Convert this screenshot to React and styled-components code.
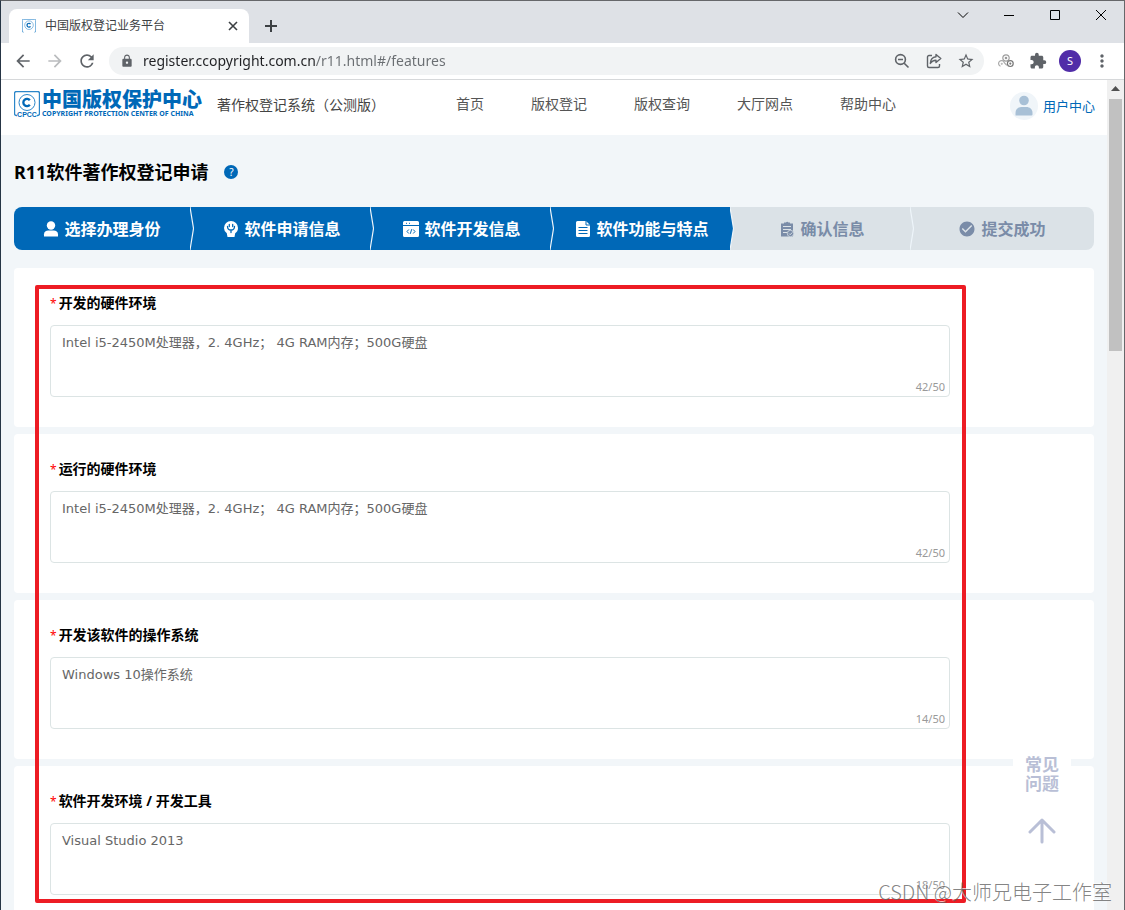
import React from 'react';
import styled, { createGlobalStyle } from 'styled-components';
import {
	MdArrowBack,
	MdArrowForward,
	MdCheckCircle,
	MdExtension,
	MdLock,
	MdMoreVert,
	MdRefresh,
	MdStarBorder
} from 'react-icons/md';

const navItems = ['首页', '版权登记', '版权查询', '大厅网点', '帮助中心'];

const hardware = 'Intel i5-2450M处理器，2. 4GHz； 4G RAM内存；500G硬盘';

const fields = [
	{ id: 'dev-hardware', label: '开发的硬件环境', value: hardware, count: 42 },
	{ id: 'run-hardware', label: '运行的硬件环境', value: hardware, count: 42 },
	{ id: 'dev-os', label: '开发该软件的操作系统', value: 'Windows 10操作系统', count: 14 },
	{ id: 'dev-tools', label: '软件开发环境 / 开发工具', value: 'Visual Studio 2013', count: 18 }
];

const BLUE = '#0068b7';
const GRAY = '#dbe2e7';

const PersonIcon = () => (
	<svg width="16" height="16" viewBox="0 0 16 16" fill="currentColor">
		<circle cx="8" cy="4.5" r="4.2" />
		<path d="M1 15.5v-2.3C1 10.8 3 9.5 5.2 9.5h5.6c2.200 0 4.200 1.300 4.200 3.700v2.300z" />
	</svg>
);

const IdeaIcon = () => (
	<svg width="16" height="16" viewBox="0 0 16 16">
		<path d="M8 0a7 7 0 0 1 7 7c0 2.500-1.200 4.200-2.800 5.300L11.500 16h-7l-.7-3.700A6.500 6.500 0 0 1 1 7a7 7 0 0 1 7-7z" fill="currentColor" />
		<path d="M4.500 5.500c0 2.500 1.500 3.500 3.500 3.500s3.500-1 3.500-3.500M6.300 3.500v2M9.700 3.500v2M8 9v2.500" fill="none" stroke={BLUE} strokeWidth="1.300" strokeLinecap="round" />
	</svg>
);

const CodeIcon = () => (
	<svg width="16" height="16" viewBox="0 0 16 16">
		<path d="M1.500 0h13A1.500 1.500 0 0 1 16 1.500V4H0V1.500A1.500 1.500 0 0 1 1.500 0zM0 5h16v9.500a1.500 1.500 0 0 1-1.500 1.500h-13A1.500 1.500 0 0 1 0 14.500z" fill="currentColor" />
		<path d="M5.800 8.500 4 10.500l1.800 2M10.200 8.500l1.800 2-1.800 2M8.700 8.200l-1.400 4.600M3 2.300h1M6 2.300h1" fill="none" stroke={BLUE} />
	</svg>
);

const FileIcon = () => (
	<svg width="16" height="16" viewBox="0 0 16 16">
		<path d="M2.500 0H11l4 4v10.500a1.500 1.500 0 0 1-1.500 1.500h-11A1.500 1.500 0 0 1 1 14.500v-13A1.500 1.500 0 0 1 2.500 0z" fill="currentColor" />
		<path d="M3.500 6.500h9M3.500 9.500h9M3.500 12.500h9M11 0v4h4" fill="none" stroke={BLUE} />
	</svg>
);

const ClipboardIcon = () => (
	<svg width="16" height="16" viewBox="0 0 16 16">
		<path d="M2 2.500h3V1.500h2a1.500 1.500 0 0 1 2.500 0H11v1h3V15.500H2z" fill="currentColor" />
		<path d="M4 5.500h8M4 8.500h8M4 11.500h4" fill="none" stroke={GRAY} />
		<circle cx="11.500" cy="12.500" r="3.200" fill="currentColor" stroke={GRAY} strokeWidth="0.800" />
		<path d="m10 12.500 1.200 1.200 2-2.200" fill="none" stroke={GRAY} />
	</svg>
);

const SuccessIcon = () => <MdCheckCircle size={18} />;

const steps = [
	{ label: '选择办理身份', icon: PersonIcon, done: true, next: BLUE },
	{ label: '软件申请信息', icon: IdeaIcon, done: true, next: BLUE },
	{ label: '软件开发信息', icon: CodeIcon, done: true, next: BLUE },
	{ label: '软件功能与特点', icon: FileIcon, done: true, next: GRAY },
	{ label: '确认信息', icon: ClipboardIcon, next: GRAY },
	{ label: '提交成功', icon: SuccessIcon }
];

const StepEdge = ({ from, to }) => (
	<svg width="4" height="43" viewBox="0 0 4 43">
		<path d="M0 0h4v43H0z" fill={to} />
		<path d="M0 0 3.500 21.500 0 43z" fill={from} />
		<path d="M0 0 3.500 21.500 0 43" fill="none" stroke="#eef5fa" strokeWidth="1.200" />
	</svg>
);

const SealIcon = ({ size, mark }) => (
	<svg width={size} height={size} viewBox="0 0 26 26" fill="none" stroke="#2b86c9">
		<path d="M3 24.500H2.500a2 2 0 0 1-2-2v-20a2 2 0 0 1 2-2h21a2 2 0 0 1 2 2v20a2 2 0 0 1-2 2H23" strokeWidth="1.400" />
		<circle cx="13" cy="11.500" r="8" />
		<path d="M15.800 9.300a3.600 3.600 0 1 0 0 4.400" strokeWidth="2.300" stroke={BLUE} />
		{mark && (
			<text x="13" y="26" textAnchor="middle" fontSize="7" fontWeight="700" fontFamily="Liberation Sans, sans-serif" fill={BLUE} stroke="none">
				CPCC
			</text>
		)}
	</svg>
);

const ZoomOutIcon = () => (
	<svg width="16" height="16" viewBox="0 0 16 16" fill="none" stroke="currentColor" strokeWidth="1.600">
		<circle cx="6.500" cy="6.500" r="4.900" />
		<path d="m10.200 10.200 4.300 4.300M4 6.500h5" />
	</svg>
);

const ShareIcon = () => (
	<svg width="16" height="16" viewBox="0 0 16 16" fill="none" stroke="currentColor" strokeWidth="1.400" strokeLinejoin="round">
		<path d="M6 2.500H3A1.500 1.500 0 0 0 1.500 4v9A1.500 1.500 0 0 0 3 14.500h9a1.500 1.500 0 0 0 1.500-1.500v-2" />
		<path d="M10 1.500 14.800 5.500 10 9.500V7.300C7.500 7.300 5.600 8.300 4.300 10.500 4.500 6.800 6.500 4.200 10 3.800z" />
	</svg>
);

const LinksIcon = () => (
	<svg width="16" height="14" viewBox="0 0 16 14" fill="none" strokeWidth="1.200">
		<circle cx="8" cy="4" r="3.200" stroke="#a0a0a0" />
		<circle cx="8" cy="4" r="0.700" stroke="#999" />
		<path d="M2.500 12.200A2.900 2.900 0 1 1 6.300 8.700l2.500 2.600" stroke="#aaa" />
		<circle cx="3.800" cy="9.800" r="0.500" stroke="#bbb" />
		<circle cx="12.300" cy="9.600" r="2.900" stroke="#777" />
		<circle cx="12.300" cy="9.600" r="0.500" stroke="#777" />
	</svg>
);

const Browser = () => (
	<div>
		<TabStrip>
			<Tab>
				<SealIcon size={14} />
				<TabTitle>中国版权登记业务平台</TabTitle>
				<TabButton aria-label="关闭标签页">
					<svg width="10" height="10" viewBox="0 0 10 10" stroke="#3c4043" strokeWidth="1.600">
						<path d="m1 1 8 8M9 1 1 9" />
					</svg>
				</TabButton>
			</Tab>
			<NewTab aria-label="新标签页">
				<svg width="12" height="12" viewBox="0 0 12 12" stroke="#3c4043" strokeWidth="2">
					<path d="M6 0v12M0 6h12" />
				</svg>
			</NewTab>
			<WindowButtons>
				<WindowButton aria-label="搜索标签页">
					<svg width="12" height="12" viewBox="0 0 12 12"><path d="m1 3.500 5 5 5-5" /></svg>
				</WindowButton>
				<WindowButton aria-label="最小化">
					<svg width="10" height="10" viewBox="0 0 10 10"><path d="M0 5.500h10" /></svg>
				</WindowButton>
				<WindowButton aria-label="最大化">
					<svg width="10" height="10" viewBox="0 0 10 10"><path d="M.5.5h9v9h-9z" /></svg>
				</WindowButton>
				<WindowButton aria-label="关闭">
					<svg width="10" height="10" viewBox="0 0 10 10"><path d="m0 0 10 10M10 0 0 10" /></svg>
				</WindowButton>
			</WindowButtons>
		</TabStrip>
		<Toolbar>
			<ToolButton aria-label="后退"><MdArrowBack size={20} /></ToolButton>
			<ToolButton aria-label="前进" $muted><MdArrowForward size={20} /></ToolButton>
			<ToolButton aria-label="刷新"><MdRefresh size={20} /></ToolButton>
			<Omnibox>
				<MdLock size={14} />
				<UrlInput aria-label="地址" defaultValue="register.ccopyright.com.cn/r11.html#/features" spellCheck={false} />
				<ToolButton aria-label="缩小"><ZoomOutIcon /></ToolButton>
				<ToolButton aria-label="分享"><ShareIcon /></ToolButton>
				<ToolButton aria-label="收藏"><MdStarBorder size={18} /></ToolButton>
			</Omnibox>
			<ToolButton aria-label="链接"><LinksIcon /></ToolButton>
			<ToolButton aria-label="扩展程序"><MdExtension size={18} /></ToolButton>
			<ToolButton aria-label="个人资料"><Profile>S</Profile></ToolButton>
			<ToolButton aria-label="菜单"><MdMoreVert size={20} /></ToolButton>
		</Toolbar>
	</div>
);

const SiteHeader = () => (
	<Header>
		<Logo href="#/">
			<SealIcon size={26} mark />
			<LogoText>
				<LogoName>中国版权保护中心</LogoName>
				<LogoCaption>COPYRIGHT PROTECTION CENTER OF CHINA</LogoCaption>
			</LogoText>
		</Logo>
		<SystemName>著作权登记系统（公测版）</SystemName>
		<Nav>
			{navItems.map((item) => (
				<NavLink key={item} href="#/">{item}</NavLink>
			))}
		</Nav>
		<UserLink href="#/user">
			<svg width="28" height="28" viewBox="0 0 28 28">
				<circle cx="14" cy="14" r="14" fill="#f0f5f9" />
				<circle cx="14" cy="8.500" r="4.800" fill="#a8c0d6" />
				<path d="M5.500 23.500v-2.500c0-4 3-6 6-6h5c3 0 6 2 6 6v1.500a1 1 0 0 1-1 1z" fill="#a8c0d6" />
			</svg>
			用户中心
		</UserLink>
	</Header>
);

const Field = ({ id, label, value, count }) => (
	<Card>
		<FieldLabel htmlFor={id}>
			<Required>*</Required>
			{label}
		</FieldLabel>
		<TextBox>
			<TextArea id={id} defaultValue={value} />
			<Counter>{count}/50</Counter>
		</TextBox>
	</Card>
);

const App = () => (
	<Window>
		<GlobalStyle />
		<Browser />
		<Viewport>
			<Page>
				<SiteHeader />
				<Main>
					<TitleRow>
						<Title>R11软件著作权登记申请</Title>
						<Help aria-label="帮助">?</Help>
					</TitleRow>
					<Steps>
						{steps.map(({ label, icon: Icon, done, next }) => (
							<Step key={label} $done={done}>
								<StepLabel $last={!next}>
									<Icon />
									{label}
								</StepLabel>
								{next && <StepEdge from={done ? BLUE : GRAY} to={next} />}
							</Step>
						))}
					</Steps>
					<Form>
						{fields.map((field) => <Field key={field.id} {...field} />)}
					</Form>
				</Main>
			</Page>
			<Scrollbar>
				<svg width="9" height="5" viewBox="0 0 9 5"><path d="M0 5 4.500 0 9 5z" fill="#505050" /></svg>
				<Thumb />
			</Scrollbar>
			<Highlight />
			<FloatTools>
				<Faq>常见<br />问题</Faq>
				<TopButton aria-label="返回顶部">
					<svg width="28" height="26" viewBox="0 0 28 26" fill="none" stroke="#b9bfd6" strokeWidth="3" strokeLinecap="round" strokeLinejoin="round">
						<path d="M14 24V2M2 14 14 2l12 12" />
					</svg>
				</TopButton>
			</FloatTools>
			<Watermark>CSDN @大师兄电子工作室</Watermark>
		</Viewport>
	</Window>
);

const GlobalStyle = createGlobalStyle`
	* { box-sizing: border-box; }
	body {
		margin: 0;
		font-family: 'Noto Sans', 'Noto Sans CJK SC', sans-serif;
		font-size: 14px;
		color: #000;
	}
	button, input, textarea { font: inherit; }
	button { padding: 0; border: 0; background: none; color: inherit; }
	a { color: inherit; text-decoration: none; }
	svg { flex: none; display: block; }
`;

const Window = styled.div`
	display: flex;
	flex-direction: column;
	height: 100vh;
	border: 1px solid #66676a;
	border-left-color: #263545;
	border-bottom: 0;
	background: #fff;
	overflow: hidden;
`;

const TabStrip = styled.div`
	display: flex;
	align-items: flex-end;
	height: 42px;
	padding-left: 8px;
	background: #dee1e6;
`;

const Tab = styled.div`
	display: flex;
	align-items: center;
	width: 240px;
	height: 34px;
	padding: 0 8px 0 13px;
	border-radius: 8px 8px 0 0;
	background: #fff;
`;

const TabTitle = styled.span`
	flex: 1;
	margin-left: 9px;
	font-size: 12px;
	line-height: 16px;
	color: #3c4043;
`;

const TabButton = styled.button`
	display: flex;
	align-items: center;
	justify-content: center;
	width: 16px;
	height: 16px;
`;

const NewTab = styled(TabButton)`
	width: 28px;
	height: 34px;
	margin-left: 8px;
`;

const WindowButtons = styled.div`
	display: flex;
	align-self: flex-start;
	margin-left: auto;
`;

const WindowButton = styled.button`
	display: flex;
	align-items: center;
	justify-content: center;
	width: 46px;
	height: 28px;
	fill: none;
	stroke: #000;
`;

const Toolbar = styled.div`
	display: flex;
	align-items: center;
	height: 37px;
	padding: 0 6px;
	border-bottom: 1px solid #d6d8da;
	background: #fff;
`;

const ToolButton = styled.button`
	display: flex;
	align-items: center;
	justify-content: center;
	flex: none;
	width: 32px;
	height: 28px;
	color: ${({ $muted }) => ($muted ? '#babcbe' : '#5f6368')};
`;

const Omnibox = styled.div`
	display: flex;
	align-items: center;
	flex: 1;
	height: 28px;
	margin: 0 6px;
	padding: 0 2px 0 11px;
	border-radius: 14px;
	background: #f1f3f4;
	color: #5f6368;
`;

/* host is darker than the path, as in the address bar */
const UrlInput = styled.input`
	flex: 1;
	min-width: 0;
	margin-left: 9px;
	padding: 0;
	border: 0;
	outline: 0;
	font-size: 14px;
	line-height: 20px;
	color: transparent;
	background: linear-gradient(to right, #202124 173px, #6a6e72 173px);
	background-clip: text;
`;

const Profile = styled.span`
	width: 22px;
	border-radius: 50%;
	background: #512da8;
	color: #fff;
	font-size: 11px;
	line-height: 22px;
	text-align: center;
`;

const Viewport = styled.div`
	position: relative;
	display: flex;
	flex: 1;
	min-height: 0;
`;

const Page = styled.div`
	flex: 1;
	min-width: 0;
	overflow: hidden;
	background: #f2f6f9;
`;

const Header = styled.header`
	display: flex;
	align-items: center;
	height: 55px;
	padding: 0 12px 8px 13px;
	background: #fff;
	white-space: nowrap;
`;

const Logo = styled.a`
	display: flex;
	align-items: center;
	gap: 2px;
	color: ${BLUE};
`;

const LogoText = styled.div`
	display: flex;
	flex-direction: column;
	width: 158px;
`;

const LogoName = styled.span`
	font-size: 20px;
	font-weight: 900;
	line-height: 20px;
`;

const LogoCaption = styled.span`
	font-size: 7px;
	font-weight: 700;
	line-height: 7px;
`;

const SystemName = styled.span`
	margin-left: 17px;
	color: #444;
`;

const Nav = styled.nav`
	display: flex;
	gap: 47px;
	margin-left: 71px;
	color: #555;
`;

const NavLink = styled.a`
	line-height: 20px;
`;

const UserLink = styled.a`
	display: flex;
	align-items: center;
	gap: 5px;
	margin-left: auto;
	padding-top: 4px;
	font-size: 13px;
	line-height: 16px;
	color: ${BLUE};
`;

const Main = styled.main`
	padding: 25px 13px 0;
`;

const TitleRow = styled.div`
	display: flex;
	align-items: center;
	gap: 16px;
`;

const Title = styled.h1`
	margin: 0;
	font-size: 18px;
	font-weight: 700;
	line-height: 24px;
`;

const Help = styled.button`
	width: 14px;
	height: 14px;
	border-radius: 50%;
	background: ${BLUE};
	color: #fff;
	font-size: 10px;
	line-height: 14px;
`;

const Steps = styled.div`
	display: flex;
	height: 43px;
	margin: 23px 0 18px;
	border-radius: 8px;
	overflow: hidden;
`;

const Step = styled.div`
	display: flex;
	flex: 1 1 0;
	background: ${({ $done }) => ($done ? BLUE : GRAY)};
	color: ${({ $done }) => ($done ? '#fff' : '#7a8ca8')};
`;

const StepLabel = styled.div`
	display: flex;
	align-items: center;
	justify-content: center;
	flex: 1;
	gap: 5px;
	padding-right: ${({ $last }) => ($last ? '4px' : 0)};
	font-size: 16px;
	font-weight: 700;
	line-height: 20px;
	white-space: nowrap;
`;

const Form = styled.form`
	display: flex;
	flex-direction: column;
	gap: 7px;
`;

const Card = styled.div`
	padding: 25px 36px 30px;
	border-radius: 4px;
	background: #fff;
`;

const FieldLabel = styled.label`
	display: flex;
	gap: 2px;
	margin-bottom: 12px;
	font-size: 14px;
	font-weight: 700;
	line-height: 20px;
`;

const Required = styled.span`
	font-size: 12px;
	font-weight: 400;
	line-height: 22px;
	height: 20px;
	color: #f00;
`;

const TextBox = styled.div`
	position: relative;
	max-width: 900px;
`;

const TextArea = styled.textarea`
	display: block;
	width: 100%;
	height: 72px;
	padding: 8px 11px;
	border: 1px solid #dce4e4;
	border-radius: 4px;
	outline: 0;
	resize: none;
	background: #fff;
	font-family: 'DejaVu Sans', 'Noto Sans CJK SC', sans-serif;
	font-size: 13px;
	line-height: 18px;
	color: #666;
`;

const Counter = styled.span`
	position: absolute;
	right: 5px;
	bottom: 2px;
	font-size: 11px;
	line-height: 16px;
	color: #999;
`;

const Scrollbar = styled.div`
	display: flex;
	flex-direction: column;
	align-items: center;
	gap: 8px;
	width: 17px;
	padding-top: 6px;
	background: #f0f0f0;
`;

const Thumb = styled.div`
	width: 13px;
	height: 252px;
	background: #c1c1c1;
`;

const Highlight = styled.div`
	position: absolute;
	top: 205px;
	bottom: 7px;
	left: 34px;
	width: 931px;
	border: 4px solid #ed1c24;
	border-radius: 2px;
	pointer-events: none;
`;

const FloatTools = styled.div`
	position: absolute;
	right: 53px;
	bottom: 54px;
	display: flex;
	flex-direction: column;
	align-items: center;
	gap: 14px;
	width: 58px;
	padding: 10px 0;
	background: #fff;
`;

const Faq = styled.button`
	font-size: 17px;
	font-weight: 700;
	line-height: 19px;
	color: #b9bfd6;
`;

const TopButton = styled.button`
	padding: 11px 0 2px;
`;

const Watermark = styled.div`
	position: absolute;
	right: 12px;
	bottom: 4px;
	font-family: 'Noto Sans CJK SC', sans-serif;
	font-size: 20px;
	font-weight: 300;
	line-height: 28px;
	color: rgba(100, 100, 100, 0.8);
	text-shadow: -1px -1px 0 rgba(255, 255, 255, 0.7);
	white-space: nowrap;
`;

export default App;
